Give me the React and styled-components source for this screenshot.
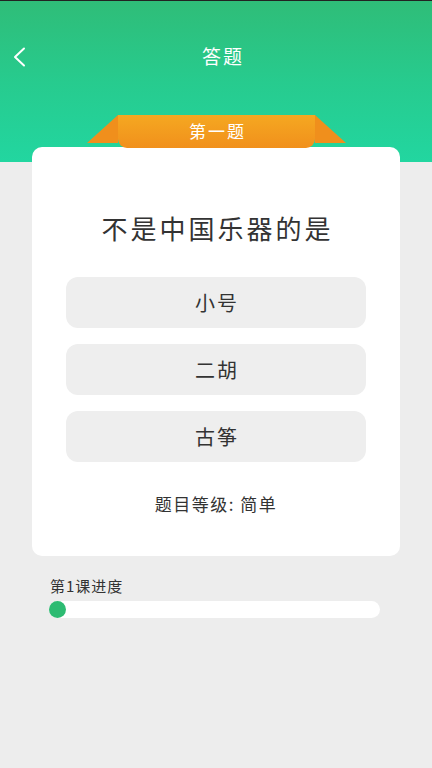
import React from 'react';
import styled, { createGlobalStyle } from 'styled-components';

const GlobalStyle = createGlobalStyle`
  html, body {
    margin: 0;
    padding: 0;
    background: #ededed;
    font-family: "Noto Sans CJK SC", "Noto Sans", sans-serif;
  }
`;

const options = ['小号', '二胡', '古筝'];

function App() {
  return (
    <Page>
      <GlobalStyle />
      <Header>
        <NavBar>
          <BackButton aria-label="back">
            <svg width="14" height="20" viewBox="0 0 14 20" fill="none">
              <path d="M12 1.5 L3 10 L12 18.5" stroke="#fff" strokeWidth="2" strokeLinecap="round" strokeLinejoin="round" />
            </svg>
          </BackButton>
          <NavTitle>答题</NavTitle>
        </NavBar>
      </Header>
      <Body>
        <Card>
          <Ribbon>
            <Wing side="left" />
            <RibbonBand>第一题</RibbonBand>
            <Wing side="right" />
          </Ribbon>
          <Question>不是中国乐器的是</Question>
          <OptionList>
            {options.map((o) => (
              <Option key={o}>{o}</Option>
            ))}
          </OptionList>
          <Level>题目等级: 简单</Level>
        </Card>
        <Progress>
          <ProgressLabel>第1课进度</ProgressLabel>
          <Track>
            <Knob />
          </Track>
        </Progress>
      </Body>
    </Page>
  );
}
export default App;

const Page = styled.div`
  min-height: 768px;
  background: #ededed;
`;

const Header = styled.div`
  height: 162px;
  box-sizing: border-box;
  border-top: 1px solid #222;
  background: linear-gradient(180deg, #2fbd78 0%, #27cb8e 50%, #22d6a0 100%);
  padding-top: 27px;
`;

const NavBar = styled.div`
  position: relative;
  height: 54px;
  display: flex;
  align-items: center;
  justify-content: center;
  padding-left: 14px;
`;

const BackButton = styled.div`
  position: absolute;
  left: 12px;
  top: 19px;
  display: flex;
`;

const NavTitle = styled.div`
  color: #fff;
  font-size: 19px;
  letter-spacing: 2px;
`;

const Body = styled.div`
  padding: 0 32px;
  margin-top: -15px;
`;

const Card = styled.div`
  position: relative;
  background: #fff;
  border-radius: 10px;
  padding: 63px 34px 40px;
  display: flex;
  flex-direction: column;
  align-items: center;
`;

const Ribbon = styled.div`
  position: absolute;
  top: -32px;
  left: 55px;
  display: flex;
  align-items: flex-start;
`;

const Wing = styled.div`
  width: 31px;
  height: 28px;
  background: #f08f1c;
  clip-path: ${(p) =>
    p.side === 'left'
      ? 'polygon(100% 0, 100% 100%, 0 100%)'
      : 'polygon(0 0, 100% 100%, 0 100%)'};
`;

const RibbonBand = styled.div`
  width: 197px;
  height: 33px;
  border-radius: 0 0 9px 9px;
  background: linear-gradient(180deg, #f5a821 0%, #f1901c 100%);
  color: #fff;
  font-size: 17px;
  display: flex;
  align-items: center;
  justify-content: center;
  padding: 0 0 2px 2px;
  box-sizing: border-box;
  letter-spacing: 2px;
`;

const Question = styled.div`
  font-size: 26px;
  line-height: 36px;
  color: #333;
  letter-spacing: 3px;
  padding-left: 3px;
`;

const OptionList = styled.div`
  width: 100%;
  margin-top: 31px;
  display: flex;
  flex-direction: column;
  gap: 16px;
`;

const Option = styled.div`
  height: 51px;
  border-radius: 12px;
  background: #eeeeee;
  color: #333;
  font-size: 20px;
  display: flex;
  align-items: center;
  justify-content: center;
  letter-spacing: 2px;
  padding-left: 2px;
`;

const Level = styled.div`
  margin-top: 30px;
  font-size: 17px;
  line-height: 24px;
  color: #333;
  letter-spacing: 1.5px;
`;

const Progress = styled.div`
  padding: 20px 20px 0 17px;
`;

const ProgressLabel = styled.div`
  font-size: 15px;
  line-height: 20px;
  color: #333;
  padding-left: 1px;
  letter-spacing: 1px;
`;

const Track = styled.div`
  margin-top: 5px;
  height: 17px;
  border-radius: 9px;
  background: #fff;
  display: flex;
  align-items: center;
`;

const Knob = styled.div`
  width: 17px;
  height: 17px;
  border-radius: 50%;
  background: #2dbb72;
`;
